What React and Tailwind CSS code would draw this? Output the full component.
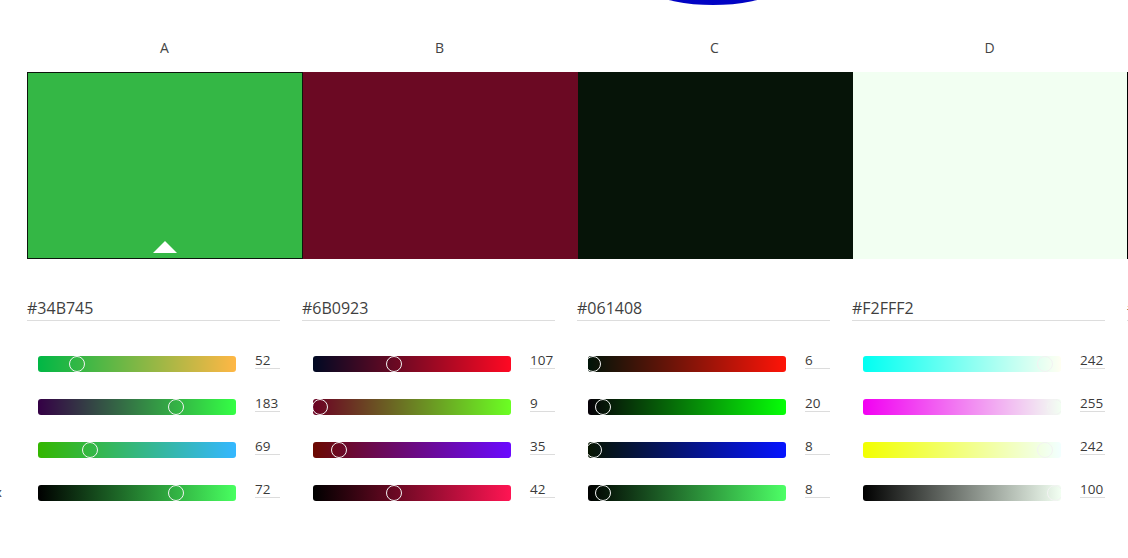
const swatches = [
  { label: 'A', hex: '#34B745', rgb: [52, 183, 69], selected: true, width: 'w-[276px]' },
  { label: 'B', hex: '#6B0923', rgb: [107, 9, 35], width: 'w-[275px]' },
  { label: 'C', hex: '#061408', rgb: [6, 20, 8], width: 'w-[275px]' },
  { label: 'D', hex: '#F2FFF2', rgb: [242, 255, 242], width: 'w-[274px]' },
  { label: 'E', hex: '#000000', rgb: [0, 0, 0], width: 'w-[275px]' },
];

const toCss = ([r, g, b]) => `rgb(${Math.round(r)}, ${Math.round(g)}, ${Math.round(b)})`;

const buildRows = (rgb) => {
  const [r, g, b] = rgb;
  const max = Math.max(r, g, b);
  const brightness = Math.round((max / 255) * 100);
  const full = max === 0 ? [255, 255, 255] : rgb.map((c) => (c * 255) / max);

  return [
    { value: r, max: 255, from: [0, g, b], to: [255, g, b] },
    { value: g, max: 255, from: [r, 0, b], to: [r, 255, b] },
    { value: b, max: 255, from: [r, g, 0], to: [r, g, 255] },
    { value: brightness, max: 100, from: [0, 0, 0], to: full },
  ];
};

const Slider = ({ row }) => {
  const center = (row.value / row.max) * 192;

  return (
    <div className="flex h-[43px] items-start">
      <div
        className="relative ml-[11px] mt-[4px] h-4 w-[198px] shrink-0 overflow-hidden rounded-[3px]"
        style={{ background: `linear-gradient(to right, ${toCss(row.from)}, ${toCss(row.to)})` }}
      >
        <div
          className="absolute top-0 h-4 w-4 rounded-full border-[1.5px] border-[#f2f2f2]"
          style={{ left: `${center - 8}px` }}
        />
      </div>
      <div className="ml-[19px] h-[17px] w-[25px] shrink-0 border-b border-[#dcdcdc] text-[13.5px] leading-[16px] text-[#3a3a3a]">
        {row.value}
      </div>
    </div>
  );
};

const SwatchControls = ({ swatch }) => (
  <div className="w-[275px] shrink-0">
    <div className="h-[25px] w-[253px] border-b border-[#dddddd] text-[16px] leading-[24px] text-[#3f3f3f]">
      {swatch.hex}
    </div>
    <div className="mt-[31px]">
      {buildRows(swatch.rgb).map((row, i) => (
        <Slider key={i} row={row} />
      ))}
    </div>
  </div>
);

const App = () => (
  <div
    className="h-[558px] w-[1128px] overflow-hidden bg-white"
    style={{ fontFamily: '"Open Sans", "Noto Sans", sans-serif' }}
  >
    <div className="h-[5px] overflow-hidden">
      <div className="ml-[513px] mt-[-395px] h-[400px] w-[400px] rounded-full bg-[radial-gradient(circle_at_50%_90%,#0000c4,#0a1cc0)]" />
    </div>

    <div className="mt-[33px] flex pl-[27px]">
      {swatches.map((s) => (
        <div key={s.label} className="w-[275px] shrink-0 text-center text-[14px] leading-[20px] text-[#444]">
          {s.label}
        </div>
      ))}
    </div>

    <div className="mt-[14px] flex pl-[27px]">
      {swatches.map((s) => (
        <div
          key={s.label}
          className={`flex h-[187px] shrink-0 flex-col items-center justify-end pb-[5px] ${s.width} ${
            s.selected ? 'border border-[#0c160c]' : ''
          }`}
          style={{ backgroundColor: s.hex }}
        >
          {s.selected && (
            <div className="h-0 w-0 border-x-[12px] border-b-[12px] border-x-transparent border-b-white" />
          )}
        </div>
      ))}
    </div>

    <div className="mt-[37px] flex">
      <div className="w-[27px] shrink-0 pt-[188px]">
        <span className="ml-[-5px] block text-[13px] leading-[16px] text-[#333]">x</span>
      </div>
      {swatches.map((s) => (
        <SwatchControls key={s.label} swatch={s} />
      ))}
    </div>
  </div>
);

export default App;
